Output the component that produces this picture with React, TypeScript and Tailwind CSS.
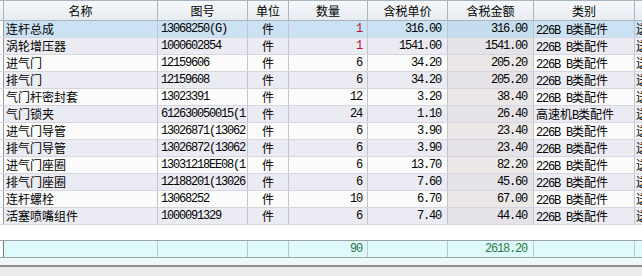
const cols =
  "grid grid-cols-[4px_154px_90px_41px_79px_80px_86px_101px_60px]";

const mono = "font-['Liberation_Mono',monospace] tracking-[-1.2px]";
const cjk = "font-['Noto_Sans_CJK_SC',sans-serif]";

type Row = {
  name: string;
  no: string;
  qty: string;
  price: string;
  amount: string;
  cat: string;
};

// 图号 is cut at the column edge in the grid, keep only what shows
const rows: Row[] = [
  { name: "连杆总成", no: "13068250(G)", qty: "1", price: "316.00", amount: "316.00", cat: "226B" },
  { name: "涡轮增压器", no: "1000602854", qty: "1", price: "1541.00", amount: "1541.00", cat: "226B" },
  { name: "进气门", no: "12159606", qty: "6", price: "34.20", amount: "205.20", cat: "226B" },
  { name: "排气门", no: "12159608", qty: "6", price: "34.20", amount: "205.20", cat: "226B" },
  { name: "气门杆密封套", no: "13023391", qty: "12", price: "3.20", amount: "38.40", cat: "226B" },
  { name: "气门锁夹", no: "612630050015(1", qty: "24", price: "1.10", amount: "26.40", cat: "高速机" },
  { name: "进气门导管", no: "13026871(13062", qty: "6", price: "3.90", amount: "23.40", cat: "226B" },
  { name: "排气门导管", no: "13026872(13062", qty: "6", price: "3.90", amount: "23.40", cat: "226B" },
  { name: "进气门座圈", no: "13031218EE08(1", qty: "6", price: "13.70", amount: "82.20", cat: "226B" },
  { name: "排气门座圈", no: "12188201(13026", qty: "6", price: "7.60", amount: "45.60", cat: "226B" },
  { name: "连杆螺栓", no: "13068252", qty: "10", price: "6.70", amount: "67.00", cat: "226B" },
  { name: "活塞喷嘴组件", no: "1000091329", qty: "6", price: "7.40", amount: "44.40", cat: "226B" },
];

const cell = "border-r border-[#c4c4cc] overflow-hidden whitespace-nowrap leading-[16px]";

const headers = ["名称", "图号", "单位", "数量", "含税单价", "含税金额", "类别", ""];

const App = () => {
  return (
    <div className="w-[642px] h-[276px] overflow-hidden bg-[#ededed] flex flex-col text-[12px] text-black">
      <div className="w-[642px] overflow-hidden flex flex-col bg-white">
        <div className={`${cols} h-[21px] border-t border-b border-[#a9b4c0] bg-gradient-to-b from-[#f6f8fa] to-[#e7ecf1]`}>
          <div className="border-r border-[#a9b4c0]" />
          {headers.map((h, i) => (
            <div
              key={i}
              className={`${cjk} border-r border-[#a9b4c0] text-center leading-[19px] overflow-hidden whitespace-nowrap`}
            >
              {h}
            </div>
          ))}
        </div>

        {rows.map((r, i) => {
          const selected = i === 0;
          const bg = selected ? "bg-[#cbe2f4]" : i % 2 === 1 ? "bg-[#ebebf3]" : "bg-[#fcfcfd]";
          const amountBg = selected ? "bg-[#c6ddef]" : i % 2 === 1 ? "bg-[#e5e2e8]" : "bg-[#ece8e7]";
          return (
            <div key={i} className={`${cols} h-[17px] border-b border-[#d6d6de] ${bg}`}>
              <div className="bg-white border-r border-[#9a9aa4]" />
              <div className={`${cell} ${cjk} pl-[2px]`}>{r.name}</div>
              <div className={`${cell} ${mono} pl-[3px]`}>{r.no}</div>
              <div className={`${cell} ${cjk} text-center`}>件</div>
              <div
                className={`${cell} ${mono} text-right pr-[5px] ${
                  r.qty === "1" ? "text-[#b3123c]" : ""
                }`}
              >
                {r.qty}
              </div>
              <div className={`${cell} ${mono} text-right pr-[6px]`}>{r.price}</div>
              <div className={`${cell} ${mono} text-right pr-[6px] ${amountBg}`}>{r.amount}</div>
              <div className={`${cell} pl-[2px]`}>
                {r.cat === "226B" ? (
                  <span className={mono}>226B&nbsp;B</span>
                ) : (
                  <>
                    <span className={cjk}>{r.cat}</span>
                    <span className={mono}>B</span>
                  </>
                )}
                <span className={cjk}>类配件</span>
              </div>
              <div className={`${cell} ${cjk} pl-[1px]`}>送</div>
            </div>
          );
        })}

        <div className="h-[15px] bg-white" />

        <div className={`${cols} h-[18px] border-t border-b border-[#9aa4a8] bg-[#defafa]`}>
          <div className="bg-white border-r border-[#707a80]" />
          <div className={cell} />
          <div className={cell} />
          <div className={cell} />
          <div className={`${cell} ${mono} text-right pr-[5px] text-[#2f6e4c]`}>90</div>
          <div className={cell} />
          <div className={`${cell} ${mono} text-right pr-[6px] text-[#2f7a4a]`}>2618.20</div>
          <div className={cell} />
          <div className={cell} />
        </div>

        <div className="h-[7px] bg-[#eef8f8]" />
      </div>
      <div className="h-[2px] bg-[#8e8e8e]" />
      <div className="flex-1 bg-[#ececec]" />
    </div>
  );
};

export default App;
